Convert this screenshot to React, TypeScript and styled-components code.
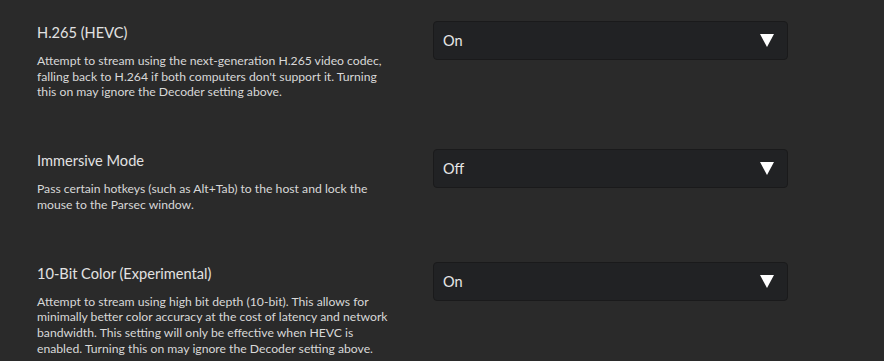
import React from "react";
import styled, { createGlobalStyle } from "styled-components";

const GlobalStyle = createGlobalStyle`
  html, body {
    margin: 0;
    padding: 0;
    background: #2a2a2a;
  }
  body {
    font-family: "Lato", "Open Sans", sans-serif;
    -webkit-font-smoothing: antialiased;
  }
`;

const Page = styled.div`
  width: 884px;
  height: 361px;
  overflow: hidden;
  background: #2a2a2a;
  padding: 21px 0 0 37px;
  box-sizing: border-box;
  display: flex;
  flex-direction: column;
`;

const Row = styled.div`
  display: flex;
  align-items: flex-start;
  gap: 40px;
  padding-bottom: 49.4px;
`;

const Label = styled.div`
  width: 356px;
  flex: none;
  padding-top: 2px;
`;

const Title = styled.div`
  font-size: 14.6px;
  line-height: 20px;
  color: #e2e2e2;
  margin-bottom: 10px;
`;

const Description = styled.div`
  font-size: 12.2px;
  line-height: 15.6px;
  color: #d8d8d8;
`;

const Select = styled.div`
  width: 355px;
  height: 39px;
  box-sizing: border-box;
  flex: none;
  display: flex;
  align-items: center;
  justify-content: space-between;
  padding: 0 13px 0 9px;
  background: #212224;
  border: 1px solid #1a1a1b;
  border-radius: 4px;
  font-size: 14.5px;
  color: #e8e8e8;
`;

const Arrow = () => (
  <svg width="14" height="13" viewBox="0 0 14 13">
    <polygon points="0,0 14,0 7,13" fill="#ffffff" />
  </svg>
);

type Setting = { title: string; desc: string; value: string };

const settings: Setting[] = [
  {
    title: "H.265 (HEVC)",
    desc:
      "Attempt to stream using the next-generation H.265 video codec, falling back to H.264 if both computers don't support it. Turning this on may ignore the Decoder setting above.",
    value: "On",
  },
  {
    title: "Immersive Mode",
    desc:
      "Pass certain hotkeys (such as Alt+Tab) to the host and lock the mouse to the Parsec window.",
    value: "Off",
  },
  {
    title: "10-Bit Color (Experimental)",
    desc:
      "Attempt to stream using high bit depth (10-bit). This allows for minimally better color accuracy at the cost of latency and network bandwidth. This setting will only be effective when HEVC is enabled. Turning this on may ignore the Decoder setting above.",
    value: "On",
  },
];

export default function App() {
  return (
    <>
      <GlobalStyle />
      <Page>
        {settings.map((s) => (
          <Row key={s.title}>
            <Label>
              <Title>{s.title}</Title>
              <Description>{s.desc}</Description>
            </Label>
            <Select>
              <span>{s.value}</span>
              <Arrow />
            </Select>
          </Row>
        ))}
      </Page>
    </>
  );
}
